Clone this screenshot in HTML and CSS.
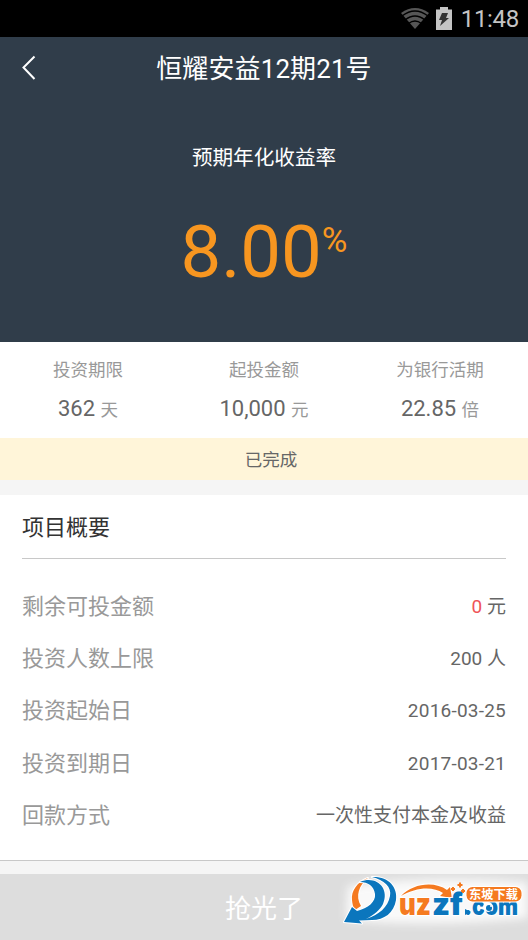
FILE: index.html
```html
<!DOCTYPE html>
<html lang="zh-CN">
<head>
<meta charset="utf-8">
<title>恒耀安益12期21号</title>
<link rel="stylesheet" href="styles.css">
</head>
<body>
<div class="status">
  <svg class="wifi" width="28" height="21" viewBox="0 0 28 21">
    <path d="M0 5Q14-5 28 5L14 21Z" fill="#565656"/>
    <path d="M1 8Q14-2 27 8M4 12Q14 4 24 12M7.500 15.500Q14 10.500 20.500 15.500" fill="none" stroke="#000" stroke-width="1.300"/>
  </svg>
  <svg class="battery" width="16" height="23" viewBox="0 0 16 23">
    <path d="M4 0h8v2.500h4V23H0V2.500h4z" fill="#c4c4c4"/>
    <path d="M6 6h6l-2 5h3L4 19l2-6H3z" fill="#333"/>
  </svg>
  <span class="clock">11:48</span>
</div>
<header class="hero">
  <div class="titlebar">
    <svg class="back" width="15" height="26" viewBox="0 0 15 26"><path d="M12.500 1.500L1.500 12.500l11 11.500" fill="none" stroke="#fff" stroke-width="2"/></svg>
    <h1 class="title">恒耀安益12期21号</h1>
  </div>
  <div class="rate-label">预期年化收益率</div>
  <div class="rate"><span>8.00</span><span class="percent">%</span></div>
</header>
<section class="stats">
  <div class="stat"><div class="stat-label">投资期限</div><div class="stat-value">362 <small>天</small></div></div>
  <div class="stat"><div class="stat-label">起投金额</div><div class="stat-value">10,000 <small>元</small></div></div>
  <div class="stat"><div class="stat-label">为银行活期</div><div class="stat-value">22.85 <small>倍</small></div></div>
</section>
<div class="state">已完成</div>
<section class="card">
  <h2 class="card-title">项目概要</h2>
  <div class="row"><span>剩余可投金额</span><span class="value"><span class="red">0</span> 元</span></div>
  <div class="row"><span>投资人数上限</span><span class="value">200 人</span></div>
  <div class="row"><span>投资起始日</span><span class="value date">2016-03-25</span></div>
  <div class="row"><span>投资到期日</span><span class="value date">2017-03-21</span></div>
  <div class="row"><span>回款方式</span><span class="value">一次性支付本金及收益</span></div>
</section>
<footer class="action">
  <span>抢光了</span>
  <svg class="logo" width="198" height="66" viewBox="0 0 198 66">
    <defs>
      <filter id="glow" x="-20%" y="-40%" width="140%" height="180%"><feGaussianBlur stdDeviation="5"/></filter>
    </defs>
    <path d="M18 12Q100 0 198 8V44Q100 54 16 46Z" fill="#fff" opacity=".85" filter="url(#glow)"/>
    <g class="outlined">
      <path class="orange" d="M38 4C27 8 21 17 22 26c.4 4 1 7 3 10l6-4C25 22 29 11 38 4z"/>
      <path class="blue" d="M30 8C46 1 60 14 53 30c-3 6-9 11-17 15 13-4 22-12 24-23C62 13 54 6 42 3c16-1 26 10 24 23-2 13-12 20-24 20l-13 .5 3 3L14 48 22 33l5 4C38 34 46 28 45 20 44 12 38 8 30 8z"/>
      <path class="orange" d="M71 22C83 9 105 7 117 16l3-3 2 11-12-2 3-3C103 12 86 13 71 22z"/>
    </g>
    <g class="outlined logo-word">
      <text class="orange" x="69" y="41" textLength="32" lengthAdjust="spacingAndGlyphs">uz</text>
      <text class="blue" x="102" y="41" textLength="31" lengthAdjust="spacingAndGlyphs">zf</text>
      <text class="blue com" x="134" y="41" textLength="54" lengthAdjust="spacingAndGlyphs">.com</text>
    </g>
    <path d="M135 35v6l6-3z" fill="#0b76bd"/>
    <path d="M130 8.500v5M127.500 11h5M123 13v4M121 15h4M133 15v4M131 17h4" stroke="#f57a20" stroke-width="2"/>
    <circle cx="158" cy="33" r="5" fill="#fff"/><circle cx="159" cy="34" r="3" fill="#0b76bd"/><circle cx="161" cy="32" r="1" fill="#fff"/>
    <rect class="outlined orange" x="136.500" y="13" width="55" height="14.500" rx="6"/>
    <text class="badge" x="139" y="25" textLength="49">东坡下载</text>
  </svg>
</footer>
</body>
</html>
```
FILE: styles.css
```css
* { box-sizing: border-box; }
body { margin: 0; width: 528px; height: 940px; overflow: hidden; background: #f5f5f5; font-family: Roboto, "Noto Sans CJK SC", sans-serif; color: #666; }
.status { height: 37px; background: #000; display: flex; align-items: center; padding: 0 9px 0 0; justify-content: flex-end; }
.wifi { margin-right: 7px; }
.battery { margin-right: 9px; }
.clock { color: #c4c4c4; font-size: 24px; line-height: 37px; padding-top: 2px; letter-spacing: -.3px; }
.hero { height: 305px; background: #303d4a; color: #fff; }
.titlebar { height: 62px; display: grid; grid-template-columns: 60px 1fr 60px; align-items: center; }
.back { margin-left: 22px; }
.title { margin: 0; font-size: 26px; font-weight: 400; line-height: 60px; text-align: center; padding-top: 2px; letter-spacing: .1px; }
.rate-label { margin-top: 43px; font-size: 20.6px; line-height: 32px; text-align: center; }
.rate { display: flex; justify-content: center; margin-top: 36px; font-size: 72.5px; line-height: 86px; color: #f79620; }
.percent { font-size: 35px; line-height: 62px; }
.stats { height: 96px; background: #fff; display: grid; grid-template-columns: repeat(3, 1fr); text-align: center; padding-top: 15px; }
.stat-label { font-size: 17.5px; line-height: 26px; color: #999; }
.stat-value { font-size: 22px; line-height: 30px; margin-top: 11px; }
.stat-value small { font-size: 17.5px; color: #999; }
.state { height: 42px; background: #fff5d9; font-size: 17.5px; line-height: 44px; text-align: center; padding-left: 14px; }
.card { margin-top: 15px; height: 366px; background: #fff; border-bottom: 1px solid #c8c8c8; padding: 0 22px; }
.card-title { margin: 0 0 22px; height: 64px; border-bottom: 1px solid #c8c8c8; font-size: 22px; font-weight: 400; line-height: 66px; color: #333; }
.row { height: 52.2px; display: flex; justify-content: space-between; align-items: center; font-size: 22px; line-height: 52px; color: #999; }
.value { font-size: 19px; color: #666; }
.date { letter-spacing: .22px; }
.red { color: #ef5358; }
.action { position: relative; height: 66px; margin-top: 13px; background: #ddd; color: #fff; font-size: 26px; line-height: 70px; text-align: center; }
.logo { position: absolute; right: 0; top: 0; }
.logo-word { font: 900 30px Inter, "Liberation Sans", sans-serif; }
.com { font-size: 25px; }
.outlined { stroke: #fff; stroke-width: 2px; stroke-linejoin: round; paint-order: stroke; }
.orange { fill: #f57a20; }
.blue { fill: #0b76bd; }
.badge { font: 700 12.2px "Noto Sans CJK SC", sans-serif; fill: #fff; }
```
